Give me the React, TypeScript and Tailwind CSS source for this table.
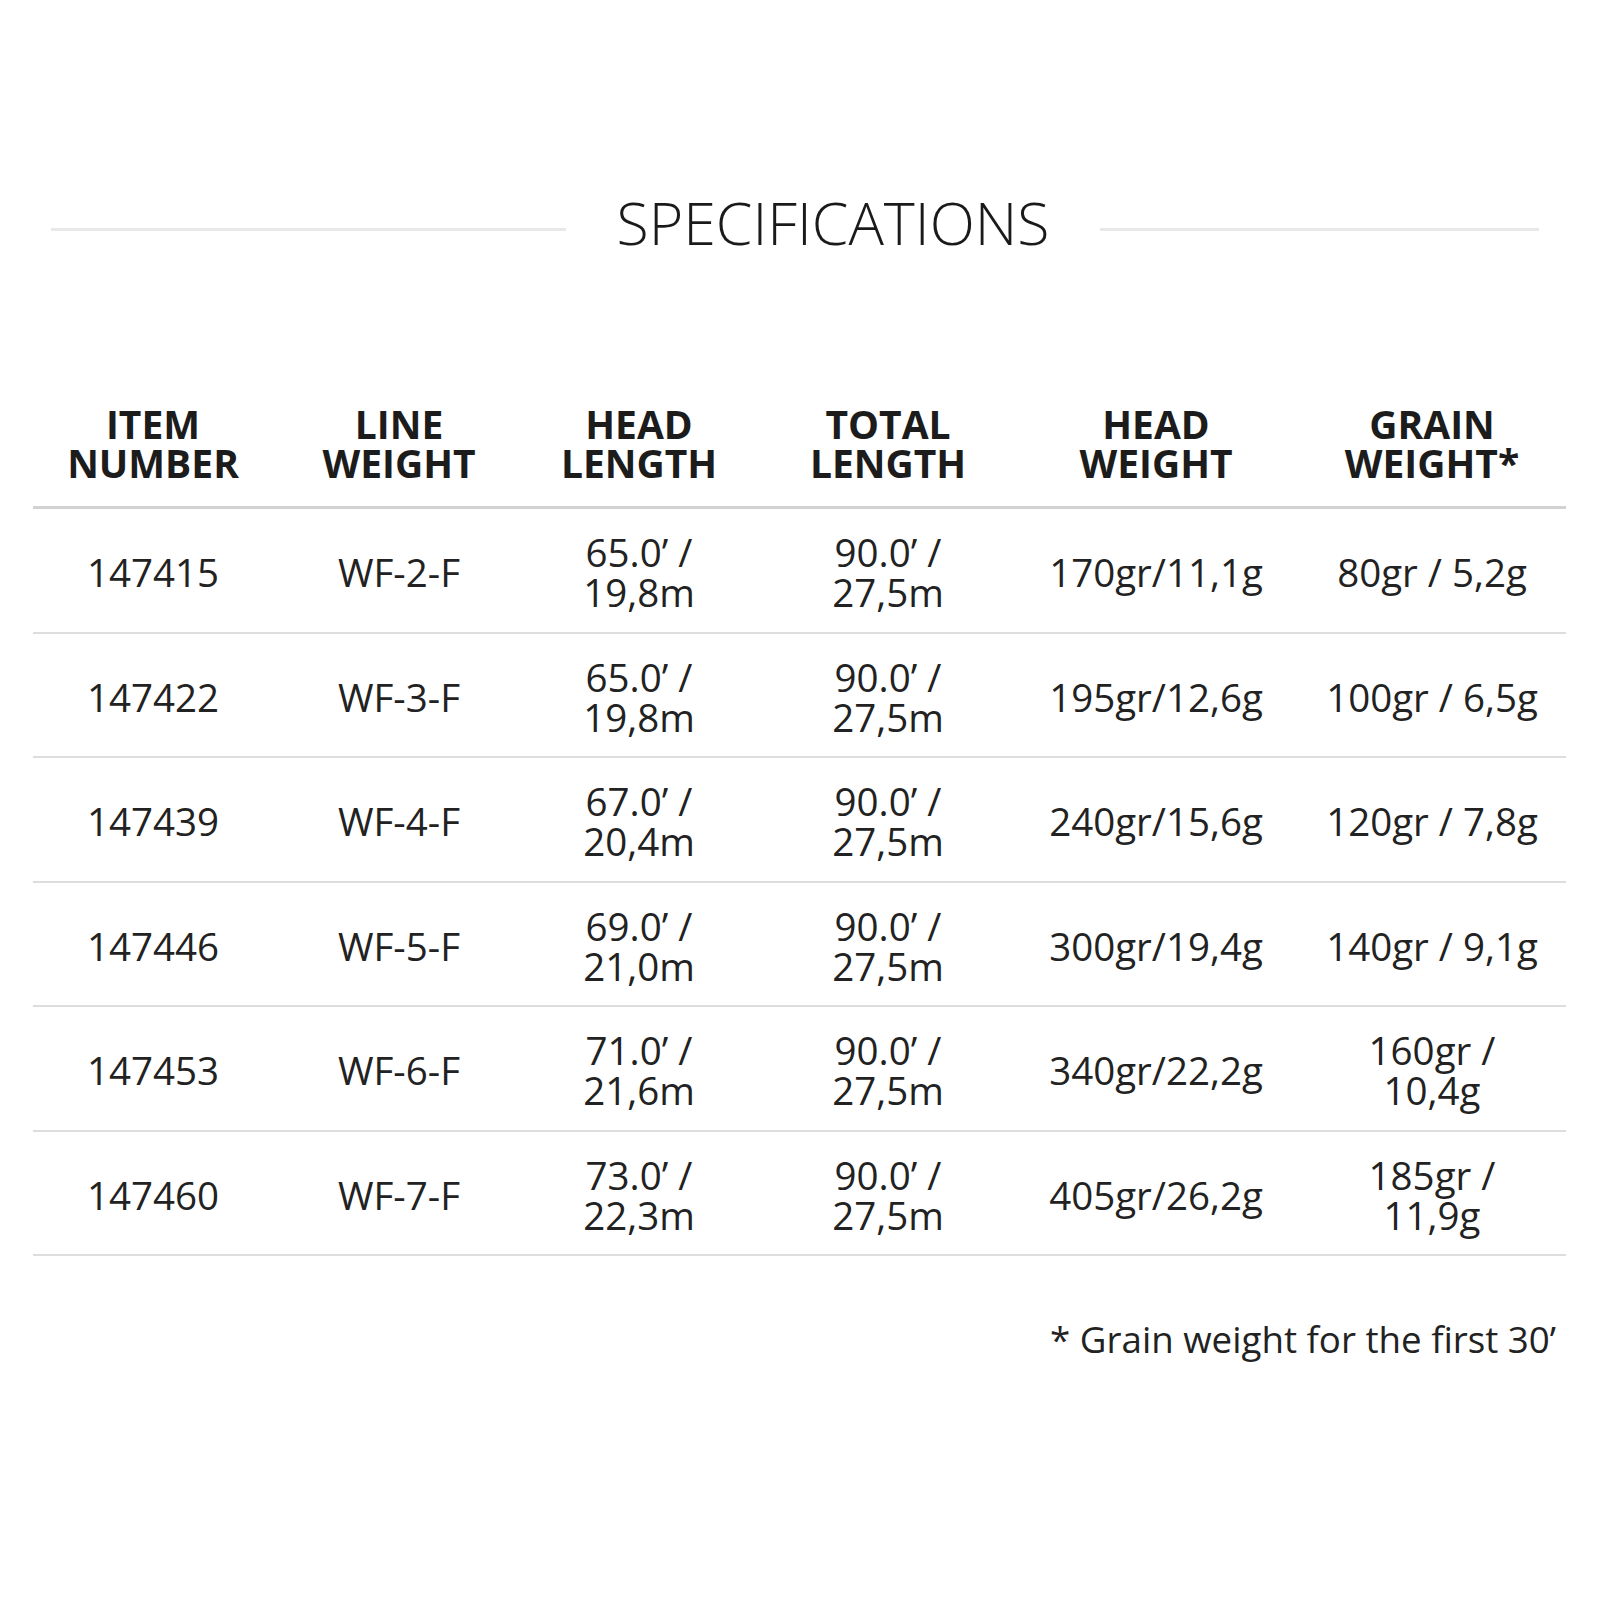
const rows: string[][][] = [
  [["147415"], ["WF-2-F"], ["65.0’ /", "19,8m"], ["90.0’ /", "27,5m"], ["170gr/11,1g"], ["80gr / 5,2g"]],
  [["147422"], ["WF-3-F"], ["65.0’ /", "19,8m"], ["90.0’ /", "27,5m"], ["195gr/12,6g"], ["100gr / 6,5g"]],
  [["147439"], ["WF-4-F"], ["67.0’ /", "20,4m"], ["90.0’ /", "27,5m"], ["240gr/15,6g"], ["120gr / 7,8g"]],
  [["147446"], ["WF-5-F"], ["69.0’ /", "21,0m"], ["90.0’ /", "27,5m"], ["300gr/19,4g"], ["140gr / 9,1g"]],
  [["147453"], ["WF-6-F"], ["71.0’ /", "21,6m"], ["90.0’ /", "27,5m"], ["340gr/22,2g"], ["160gr /", "10,4g"]],
  [["147460"], ["WF-7-F"], ["73.0’ /", "22,3m"], ["90.0’ /", "27,5m"], ["405gr/26,2g"], ["185gr /", "11,9g"]],
];

const headers: string[][] = [
  ["ITEM", "NUMBER"],
  ["LINE", "WEIGHT"],
  ["HEAD", "LENGTH"],
  ["TOTAL", "LENGTH"],
  ["HEAD", "WEIGHT"],
  ["GRAIN", "WEIGHT*"],
];

const grid = "grid grid-cols-[240px_252px_228px_270px_266px_277px]";

function Cell({ lines, last }: { lines: string[]; last: boolean }) {
  return (
    <div className={`flex flex-col items-center justify-center text-center ${last ? "pl-[9px]" : ""}`}>
      {lines.map((l) => (
        <span key={l} className="block whitespace-nowrap">
          {l}
        </span>
      ))}
    </div>
  );
}

export default function App() {
  return (
    <div
      className="min-h-[1601px] w-[1601px] bg-white text-[#222]"
      style={{ fontFamily: '"Open Sans", "Noto Sans", sans-serif' }}
    >
      <div className="ml-[51px] flex w-[1488px] items-center justify-between pt-[193px]">
        <div className="mt-[14px] h-[3px] w-[515px] bg-[#e8e8e8]" />
        <h1 className="text-[59px] font-light leading-none text-[#1a1a1a]">SPECIFICATIONS</h1>
        <div className="mt-[14px] h-[3px] w-[439px] bg-[#e8e8e8]" />
      </div>

      <div className="ml-[33px] mt-[152px] w-[1533px]">
        <div className={`${grid} border-b-[3px] border-[#d2d2d2] pb-[24px] text-[39px] font-bold leading-[39px] text-[#1c1c1c]`}>
          {headers.map((h, i) => (
            <Cell key={i} lines={h} last={i === 5} />
          ))}
        </div>

        {rows.map((row, r) => (
          <div
            key={r}
            className={`${grid} h-[124.5px] border-b-2 border-[#dddddd] pt-[4px] text-[38.5px] leading-[40px]`}
          >
            {row.map((c, i) => (
              <Cell key={i} lines={c} last={i === 5} />
            ))}
          </div>
        ))}
      </div>

      <p className="mt-[61px] pr-[45px] text-right text-[36.7px] leading-[1.2] text-[#222]">
        * Grain weight for the first 30’
      </p>
    </div>
  );
}
